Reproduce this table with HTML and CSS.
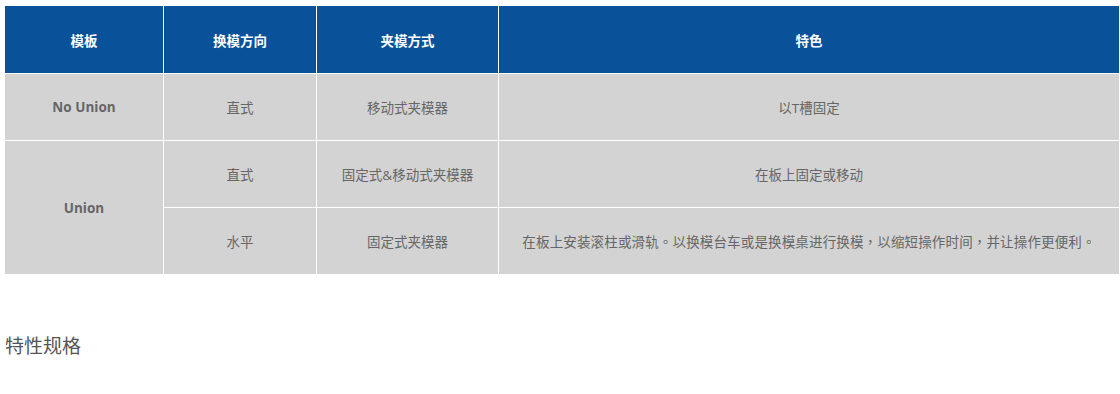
FILE: index.html
```html
<!DOCTYPE html>
<html lang="zh-CN">
<head>
    <meta charset="UTF-8">
    <meta name="viewport" content="width=device-width, initial-scale=1.0">
    <title>模板</title>
    <link rel="stylesheet" href="styles.css">
</head>
<body>

<div class="page">
    <!-- Mould plate comparison -->
    <table class="spec-table">
        <colgroup>
            <col class="col-plate">
            <col class="col-dir">
            <col class="col-clamp">
            <col>
        </colgroup>
        <thead>
            <tr>
                <th>模板</th>
                <th>换模方向</th>
                <th>夹模方式</th>
                <th>特色</th>
            </tr>
        </thead>
        <tbody>
            <tr>
                <td class="name">No Union</td>
                <td>直式</td>
                <td>移动式夹模器</td>
                <td>以T槽固定</td>
            </tr>
            <tr>
                <td class="name" rowspan="2">Union</td>
                <td>直式</td>
                <td>固定式&amp;移动式夹模器</td>
                <td>在板上固定或移动</td>
            </tr>
            <tr>
                <td>水平</td>
                <td>固定式夹模器</td>
                <td class="note" lang="zh-TW">在板上安装滚柱或滑轨。以换模台车或是换模桌进行换模，以缩短操作时间，并让操作更便利。</td>
            </tr>
        </tbody>
    </table>

    <h2 class="section-title">特性规格</h2>
</div>

</body>
</html>
```

FILE: styles.css
```css
body {
    margin: 0;
    font-family: "Open Sans", "Noto Sans CJK SC", sans-serif;
    color: #666;
    background: #fff;
}
.page {
    padding: 5px 0 0 4px;
}
.spec-table {
    width: 1116px;
    table-layout: fixed;
    border-collapse: collapse;
    font-size: 13.5px;
}
.col-plate {
    width: 159px;
}
.col-dir {
    width: 153px;
}
.col-clamp {
    width: 182px;
}
.spec-table th,
.spec-table td {
    border: 1px solid #fff;
    height: 66px;
    padding: 0 6px;
    text-align: center;
    vertical-align: middle;
}
.spec-table th {
    height: 67px;
    background-color: #095299;
    color: #fff;
    font-weight: bold;
}
.spec-table td {
    background-color: #d3d3d3;
    color: #666;
}
.spec-table td.name {
    font-weight: bold;
}
/* long description uses centred full-width punctuation */
.spec-table td.note {
    font-family: "Noto Sans CJK TC", sans-serif;
    letter-spacing: 0.15px;
}
.section-title {
    margin: 56px 0 0 1px;
    font-size: 19px;
    font-weight: normal;
    color: #555;
}
```
